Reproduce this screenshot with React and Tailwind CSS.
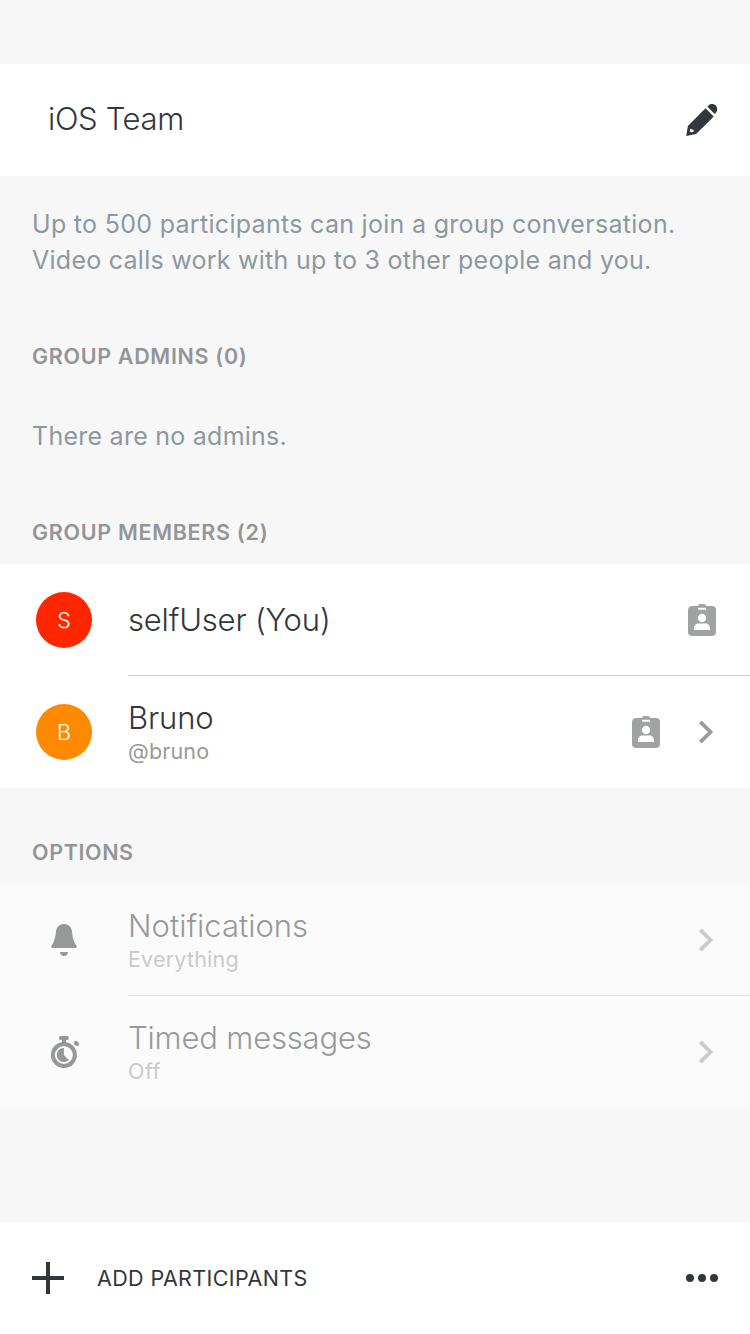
const Pencil = () => (
  <svg className="size-8 shrink-0" viewBox="0 0 32 32" fill="#33373a">
    <path fillRule="evenodd" d="M1.900 21.900 19.500 4.300l8.200 8.200L10.100 30.100.2 32zM4.200 24.600l-.5 2.500 1.600 1.400 2.700-1.300-.6-1.400-1.600-.2z" />
    <path d="M21.300 2.600l1.300-1.200c2-1.900 5.200-1.700 7.100.2 1.900 1.900 2.100 5.100.2 7.100l-1.200 1.300z" />
  </svg>
);

const Badge = () => (
  <svg className="h-8 w-7 shrink-0" viewBox="0 0 28 32" fill="#a1a3a3">
    <path
      fillRule="evenodd"
      d="M4 2h6c.2-1.300.9-2 2-2h4c1.100 0 1.800.7 2 2h6a4 4 0 0 1 4 4v22a4 4 0 0 1-4 4H4a4 4 0 0 1-4-4V6a4 4 0 0 1 4-4zM10 3.800v2h8v-2zM14 9.800a4.200 4.200 0 1 0 0 8.400 4.200 4.200 0 0 0 0-8.400zM5.900 26h16.200v-1.500c0-3-1.800-5-4.600-5h-7c-2.800 0-4.600 2-4.600 5z"
    />
  </svg>
);

const Chevron = () => (
  <svg className="h-6 w-4 shrink-0" viewBox="0 0 16 24" fill="none" stroke="#9b9c9c" strokeWidth="3.8">
    <path d="M2.300 1.800l10.200 10.200L2.300 22.200" />
  </svg>
);

const Bell = () => (
  <svg className="size-8" viewBox="0 0 32 32" fill="#33373a">
    <path d="M16 0c4.600 0 7.700 3.100 8.100 8 .5 6 1.600 9.600 4.400 13.700.9 1.300.2 2.300-1.300 2.300H4.800c-1.500 0-2.200-1-1.300-2.300C6.300 17.600 7.400 14 7.900 8 8.300 3.100 11.400 0 16 0zM12 28h8c0 2.600-1.800 4-4 4s-4-1.400-4-4z" />
  </svg>
);

const Timer = () => (
  <svg className="size-8" viewBox="0 0 32 32" fill="#33373a">
    <circle cx="15.900" cy="19" r="11" fill="none" stroke="#33373a" strokeWidth="4" />
    <path d="M12.500 0h6.800c2 0 2 4 0 4H18v4h-4V4h-1.500c-2 0-2-4 0-4z" />
    <path d="M15.900 12v7l4.900 4.900A7 7 0 1 1 15.900 12z" />
    <ellipse cx="28.400" cy="7.500" rx="2.200" ry="2.900" transform="rotate(-45 28.400 7.500)" />
  </svg>
);

const TITLE = "text-[31px] leading-9 font-light whitespace-nowrap text-[#33373a]";

function Row({ icon, title, titleSpacing, subtitle, subSpacing = "", trailing, divided }) {
  return (
    <div className="flex h-28">
      <div className="flex w-32 shrink-0 items-center justify-center">{icon}</div>
      <div className={"flex flex-1 items-center justify-between pr-9 " + (divided ? "border-b border-[#c8cacb]" : "pb-px")}>
        <div className={subtitle ? "flex flex-col pt-[3px]" : "pt-px"}>
          <div className={TITLE + " " + titleSpacing}>{title}</div>
          {subtitle && (
            <div className={"text-[21.5px] leading-[30px] whitespace-nowrap text-[#999a9a] " + subSpacing}>{subtitle}</div>
          )}
        </div>
        <div className="flex items-center pt-px">{trailing}</div>
      </div>
    </div>
  );
}

const Avatar = ({ letter, color }) => (
  <div className={"flex size-14 items-center justify-center rounded-full text-[21.5px] font-light text-white " + color}>{letter}</div>
);

const Heading = ({ children, spacing }) => (
  <h2 className={"flex h-16 items-center px-8 text-[21.5px] font-semibold whitespace-nowrap text-[#949596] " + spacing}>{children}</h2>
);

export default function App() {
  return (
    <div className="flex h-[1334px] w-[750px] flex-col overflow-hidden bg-[#f7f7f7] pt-16 font-['Inter',sans-serif]">
      <header className="flex h-28 items-center justify-between bg-white pr-8 pl-12">
        <h1 className={TITLE + " pb-0.5 tracking-[-0.35px]"}>iOS Team</h1>
        <Pencil />
      </header>
      <div className="px-8 pt-[30px] text-[25px] leading-9 whitespace-nowrap text-[#8d989f]">
        <p className="tracking-[0.3px]">Up to 500 participants can join a group conversation.</p>
        <p className="tracking-[0.26px]">Video calls work with up to 3 other people and you.</p>
      </div>
      <section className="mt-[46px]">
        <Heading spacing="tracking-[0.68px]">GROUP ADMINS (0)</Heading>
        <p className="px-8 pt-[30px] text-[25px] leading-9 tracking-[0.25px] text-[#8d989f]">There are no admins.</p>
      </section>
      <section className="mt-[46px]">
        <Heading spacing="tracking-[0.7px]">GROUP MEMBERS (2)</Heading>
        <div className="bg-white">
          <Row divided icon={<Avatar letter="S" color="bg-[#ff2600]" />} title="selfUser (You)" titleSpacing="tracking-[-0.18px]" trailing={<div className="-mr-0.5"><Badge /></div>} />
          <Row icon={<Avatar letter="B" color="bg-[#ff8a00]" />} title="Bruno" titleSpacing="tracking-[-0.1px]" subtitle="@bruno" subSpacing="tracking-[0.15px]" trailing={<div className="flex items-center gap-[38px]"><Badge /><Chevron /></div>} />
        </div>
      </section>
      <section className="mt-8">
        <Heading spacing="tracking-[0.62px]">OPTIONS</Heading>
        <div className="bg-[#fbfbfb]">
          <div className="opacity-50">
            <Row divided icon={<Bell />} title="Notifications" titleSpacing="tracking-[0px]" subtitle="Everything" subSpacing="tracking-[0.2px]" trailing={<Chevron />} />
            <Row icon={<Timer />} title="Timed messages" titleSpacing="tracking-[-0.18px]" subtitle="Off" subSpacing="tracking-[0.5px]" trailing={<Chevron />} />
          </div>
        </div>
      </section>
      <footer className="mt-auto flex h-28 items-center bg-white px-8">
        <svg className="size-8" viewBox="0 0 32 32" fill="#33373a"><path d="M14 0h4v14h14v4H18v14h-4V18H0v-4h14z" /></svg>
        <span className="ml-[33px] text-[21.5px] tracking-[0.37px] whitespace-nowrap text-[#33373a]">ADD PARTICIPANTS</span>
        <svg className="ml-auto h-2 w-8" viewBox="0 0 32 8" fill="#33373a">
          <circle cx="4" cy="4" r="4" /><circle cx="16" cy="4" r="4" /><circle cx="28" cy="4" r="4" />
        </svg>
      </footer>
    </div>
  );
}
